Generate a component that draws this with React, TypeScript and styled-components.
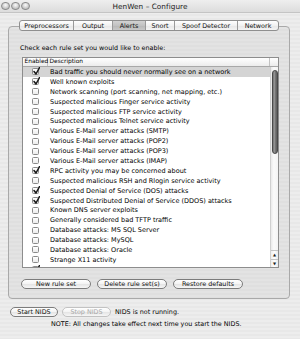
import React from 'react'
import styled, { createGlobalStyle } from 'styled-components'

const GlobalStyle = createGlobalStyle`
  html, body {
    margin: 0;
    padding: 0;
  }
  body {
    width: 300px;
    height: 339px;
    overflow: hidden;
    font-family: 'DejaVu Sans', 'Liberation Sans', sans-serif;
    color: #000;
  }
`

const pinstripe = (a: string, b: string) =>
  `repeating-linear-gradient(to bottom, ${a} 0px, ${a} 2px, ${b} 2px, ${b} 4px)`

const Window = styled.div`
  width: 300px;
  height: 339px;
  background: ${pinstripe('#ededed', '#e8e8e8')};
  display: flex;
  flex-direction: column;
`

const TitleBar = styled.div`
  height: 13px;
  display: grid;
  grid-template-columns: 40px 1fr 40px;
  align-items: center;
  background: linear-gradient(to bottom, #eeeeee, #dcdcdc);
  border-bottom: 1px solid #c4c4c4;
  box-sizing: border-box;
`

const Lights = styled.div`
  display: flex;
  gap: 1.5px;
  padding-left: 1px;
`

const Light = styled.span`
  width: 6.5px;
  height: 6.5px;
  border-radius: 50%;
  background: radial-gradient(circle at 50% 35%, #fbfbfb 0%, #c9c9c9 60%, #a5a5a5 100%);
  border: 0.5px solid #8c8c8c;
`

const Title = styled.div`
  text-align: center;
  font-size: 7.3px;
  color: #222;
  letter-spacing: 0.05px;
`

const Body = styled.div`
  padding: 13px 10px 0 8px;
`

const Group = styled.div`
  border: 1px solid #a9a9a9;
  border-radius: 4px;
  background: ${pinstripe('#e3e3e3', '#dfdfdf')};
  padding: 0 10px 9px 13px;
  height: 273px;
  box-sizing: border-box;
  display: flex;
  flex-direction: column;
`

const TabBar = styled.div`
  display: flex;
  justify-content: center;
  margin: -7px -10px 0 -13px;
`

const Tabs = styled.div`
  display: flex;
  height: 11px;
  border: 1px solid #8f8f8f;
  border-radius: 3px;
  overflow: hidden;
  box-sizing: border-box;
  background: linear-gradient(to bottom, #ffffff, #f1f1f1 50%, #e6e6e6 51%, #f4f4f4);
`

const Tab = styled.div<{ $w: number; $active?: boolean }>`
  width: ${(p) => p.$w}px;
  display: flex;
  align-items: center;
  justify-content: center;
  font-size: 6.4px;
  color: #111;
  border-left: 1px solid #9a9a9a;
  &:first-child {
    border-left: none;
  }
  ${(p) =>
    p.$active &&
    `background: linear-gradient(to bottom, #d2d2d2, #c2c2c2 50%, #b6b6b6 51%, #c8c8c8);`}
`

const Prompt = styled.div`
  font-size: 6.4px;
  margin: 13px 0 0 -2px;
  height: 8px;
  line-height: 8px;
`

const Table = styled.div`
  margin-top: 5px;
  height: 211px;
  border: 1px solid #8d8d8d;
  background: #fff;
  box-sizing: border-box;
  display: flex;
  flex-direction: column;
  overflow: hidden;
`

const Header = styled.div`
  display: flex;
  height: 8px;
  flex-shrink: 0;
  background: linear-gradient(to bottom, #ffffff, #ececec);
  border-bottom: 1px solid #a8a8a8;
  font-size: 5.9px;
  line-height: 7px;
`

const HeadCell = styled.div<{ $w?: number; $fill?: boolean }>`
  ${(p) => (p.$w ? `width: ${p.$w}px;` : '')}
  ${(p) => (p.$fill ? 'flex: 1;' : '')}
  padding-left: 1.5px;
  border-right: 1px solid #c2c2c2;
  box-sizing: border-box;
  white-space: nowrap;
`

const Corner = styled.div`
  width: 8px;
  flex-shrink: 0;
`

const Content = styled.div`
  flex: 1;
  display: flex;
  min-height: 0;
`

const Rows = styled.div`
  flex: 1;
  overflow: hidden;
`

const Row = styled.div<{ $selected?: boolean }>`
  height: 9.9px;
  display: flex;
  align-items: center;
  background: ${(p) => (p.$selected ? '#d4d4d4' : 'transparent')};
  font-size: 6.5px;
  white-space: nowrap;
`

const CheckCell = styled.div`
  width: 25px;
  display: flex;
  justify-content: center;
  flex-shrink: 0;
`

const Box = styled.span`
  width: 7px;
  height: 7px;
  box-sizing: border-box;
  border: 1px solid #8a8a8a;
  border-radius: 1.5px;
  background: linear-gradient(to bottom, #ffffff, #ececec);
  display: flex;
  align-items: center;
  justify-content: center;
  position: relative;
  svg {
    position: absolute;
    left: 0;
    top: -2px;
  }
`

const Desc = styled.div`
  padding-left: 2px;
`

const Scroll = styled.div`
  width: 8px;
  flex-shrink: 0;
  border-left: 1px solid #d0d0d0;
  background: linear-gradient(to right, #e9e9e9, #fafafa 40%, #f3f3f3);
  display: flex;
  flex-direction: column;
  box-sizing: border-box;
`

const Track = styled.div`
  flex: 1;
  padding-top: 3px;
`

const Thumb = styled.div`
  height: 84px;
  margin: 0 0.5px;
  border-radius: 4px;
  border: 1px solid #4a4a4a;
  box-sizing: border-box;
  background: linear-gradient(to right, #6b6b6b, #9c9c9c 30%, #7a7a7a 55%, #5c5c5c);
`

const Arrow = styled.div`
  height: 7.5px;
  display: flex;
  align-items: center;
  justify-content: center;
  border-top: 1px solid #c4c4c4;
  background: linear-gradient(to right, #eeeeee, #ffffff 50%, #eaeaea);
  font-size: 4px;
  color: #222;
`

const ButtonRow = styled.div`
  display: flex;
  gap: 6px;
  margin: auto 0 0 -1px;
`

const Pill = styled.button<{ $w: number; $disabled?: boolean }>`
  width: ${(p) => p.$w}px;
  height: 10px;
  padding: 0;
  border-radius: 6px;
  border: 1px solid ${(p) => (p.$disabled ? '#c2c2c2' : '#7c7c7c')};
  background: linear-gradient(to bottom, #ffffff, #f3f3f3 50%, #e4e4e4 51%, #f6f6f6);
  font-family: 'DejaVu Sans', 'Liberation Sans', sans-serif;
  font-size: 6.4px;
  line-height: 8px;
  color: ${(p) => (p.$disabled ? '#a8a8a8' : '#111')};
  box-sizing: border-box;
`

const Footer = styled.div`
  padding: 8px 0 0 10px;
  display: flex;
  flex-direction: column;
`

const NidsRow = styled.div`
  display: flex;
  align-items: center;
  gap: 4px;
  font-size: 6.4px;
`

const Note = styled.div`
  font-size: 6.4px;
  margin: 3px 0 0 41px;
`

const Check = () => (
  <svg width="7" height="8" viewBox="0 0 7 8">
    <path d="M1 4.5 L3 7 L6.5 0.5" stroke="#1a1a1a" strokeWidth="1.5" fill="none" strokeLinecap="round" strokeLinejoin="round" />
  </svg>
)

const rules: [string, boolean][] = [
  ['Bad traffic you should never normally see on a network', true],
  ['Well known exploits', true],
  ['Network scanning (port scanning, net mapping, etc.)', false],
  ['Suspected malicious Finger service activity', false],
  ['Suspected malicious FTP service activity', false],
  ['Suspected malicious Telnet service activity', false],
  ['Various E-Mail server attacks (SMTP)', false],
  ['Various E-Mail server attacks (POP2)', false],
  ['Various E-Mail server attacks (POP3)', false],
  ['Various E-Mail server attacks (IMAP)', false],
  ['RPC activity you may be concerned about', true],
  ['Suspected malicious RSH and Rlogin service activity', false],
  ['Suspected Denial of Service (DOS) attacks', true],
  ['Suspected Distributed Denial of Service (DDOS) attacks', true],
  ['Known DNS server exploits', false],
  ['Generally considered bad TFTP traffic', false],
  ['Database attacks: MS SQL Server', false],
  ['Database attacks: MySQL', false],
  ['Database attacks: Oracle', false],
  ['Strange X11 activity', false],
  ["Bad ICMP traffic you shouldn't be seeing", true],
]

const tabs: [string, number][] = [
  ['Preprocessors', 53],
  ['Output', 38],
  ['Alerts', 32],
  ['Snort', 28],
  ['Spoof Detector', 62],
  ['Network', 40],
]

export default function App() {
  return (
    <Window>
      <GlobalStyle />
      <TitleBar>
        <Lights>
          <Light />
          <Light />
          <Light />
        </Lights>
        <Title>HenWen – Configure</Title>
        <span />
      </TitleBar>
      <Body>
        <Group>
          <TabBar>
            <Tabs>
              {tabs.map(([name, w]) => (
                <Tab key={name} $w={w} $active={name === 'Alerts'}>
                  {name}
                </Tab>
              ))}
            </Tabs>
          </TabBar>
          <Prompt>Check each rule set you would like to enable:</Prompt>
          <Table>
            <Header>
              <HeadCell $w={25}>Enabled</HeadCell>
              <HeadCell $fill>Description</HeadCell>
              <Corner />
            </Header>
            <Content>
              <Rows>
                {rules.map(([text, on], i) => (
                  <Row key={text} $selected={i === 0}>
                    <CheckCell>
                      <Box>{on && <Check />}</Box>
                    </CheckCell>
                    <Desc>{text}</Desc>
                  </Row>
                ))}
              </Rows>
              <Scroll>
                <Track>
                  <Thumb />
                </Track>
                <Arrow>▲</Arrow>
                <Arrow>▼</Arrow>
              </Scroll>
            </Content>
          </Table>
          <ButtonRow>
            <Pill $w={70}>New rule set</Pill>
            <Pill $w={70}>Delete rule set(s)</Pill>
            <Pill $w={70}>Restore defaults</Pill>
          </ButtonRow>
        </Group>
      </Body>
      <Footer>
        <NidsRow>
          <Pill $w={48}>Start NIDS</Pill>
          <Pill $w={49} $disabled>
            Stop NIDS
          </Pill>
          <span>NIDS is not running.</span>
        </NidsRow>
        <Note>NOTE: All changes take effect next time you start the NIDS.</Note>
      </Footer>
    </Window>
  )
}
